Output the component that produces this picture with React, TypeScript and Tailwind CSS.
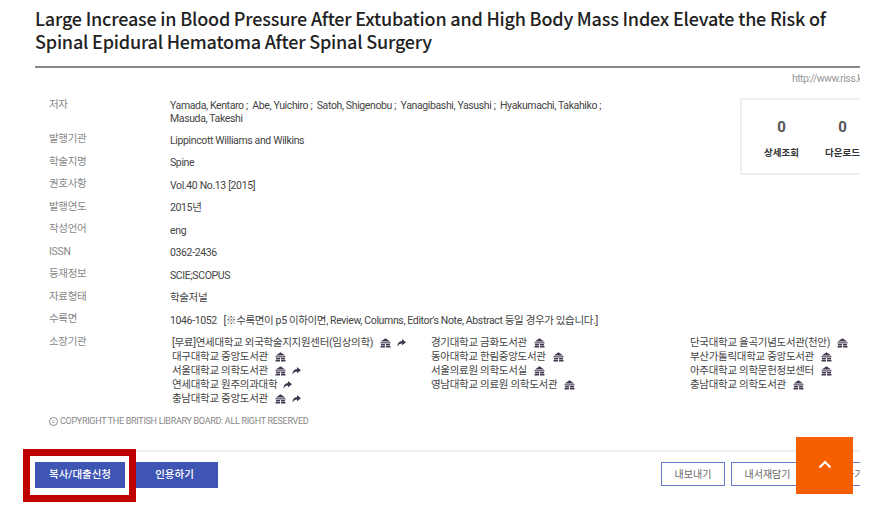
const font = "font-['Roboto','Noto_Sans_CJK_KR',sans-serif]";

const rows: [string, React.ReactNode][] = [
    ['발행기관', 'Lippincott Williams and Wilkins'],
    ['학술지명', 'Spine'],
    ['권호사항', 'Vol.40 No.13 [2015]'],
    ['발행연도', '2015년'],
    ['작성언어', 'eng'],
    ['ISSN', '0362-2436'],
    ['등재정보', 'SCIE;SCOPUS'],
    ['자료형태', '학술저널'],
    ['수록면', "1046-1052   [※수록면이 p5 이하이면, Review, Columns, Editor's Note, Abstract 등일 경우가 있습니다.]"],
];

type Holding = { name: string; link?: boolean; house?: boolean };

const holdings: Holding[][] = [
    [
        { name: '[무료]연세대학교 외국학술지지원센터(임상의학)', house: true, link: true },
        { name: '대구대학교 중앙도서관', house: true },
        { name: '서울대학교 의학도서관', house: true, link: true },
        { name: '연세대학교 원주의과대학', link: true },
        { name: '충남대학교 중앙도서관', house: true, link: true },
    ],
    [
        { name: '경기대학교 금화도서관', house: true },
        { name: '동아대학교 한림중앙도서관', house: true },
        { name: '서울의료원 의학도서실', house: true },
        { name: '영남대학교 의료원 의학도서관', house: true },
    ],
    [
        { name: '단국대학교 율곡기념도서관(천안)', house: true },
        { name: '부산가톨릭대학교 중앙도서관', house: true },
        { name: '아주대학교 의학문헌정보센터', house: true },
        { name: '충남대학교 의학도서관', house: true },
    ],
];

function HouseIcon() {
    return (
        <svg width="11" height="10" viewBox="0 0 11 10" className="ml-[7px] mt-[2px] shrink-0">
            <path d="M5.5 0.3 L10.2 3.6 H0.8 Z" fill="#433850" />
            <path d="M0.5 4.3 H10.5 V5.4 H0.5 Z" fill="#433850" />
            <path d="M1 6 H5 V7.4 H1 Z M6 6 H10 V7.4 H6 Z M0.5 8 H5 V9.6 H0.5 Z M6 8 H10.5 V9.6 H6 Z" fill="#433850" />
        </svg>
    );
}

function ShareIcon() {
    return (
        <svg width="9" height="8" viewBox="0 0 9 8" className="ml-[6px] mt-[3px] shrink-0">
            <path d="M5 0 L9 3.2 L5 6.2 V4.4 C3 4.4 1.6 5.2 0.6 7.6 C0.4 4.4 2 2 5 1.9 Z" fill="#433850" />
        </svg>
    );
}

export default function App() {
    return (
        <div className={`${font} relative w-[890px] h-[515px] overflow-hidden bg-white`}>
            <div className="w-[860px] h-[515px] overflow-hidden pl-[35px]">
                {/* Title */}
                <h1 className="pt-[7px] h-[66px] w-[825px] font-['Noto_Sans_CJK_KR','Noto_Sans',sans-serif] text-[18px] leading-[23px] tracking-[-0.2px] font-medium text-[#222] whitespace-nowrap">
                    Large Increase in Blood Pressure After Extubation and High Body Mass Index Elevate the Risk of
                    <br />
                    Spinal Epidural Hematoma After Spinal Surgery
                </h1>
                <div className="h-[2px] w-[825px] bg-[#888]" />
                <div className="w-[825px] h-[25px] overflow-hidden pl-[757px] pt-[4px] text-[10.5px] leading-[14px] tracking-[-0.55px] text-[#999] whitespace-nowrap">
                    http://www.riss.kr/link
                </div>

                <div className="flex w-[825px]">
                    {/* Detail rows */}
                    <div className="w-[705px] shrink-0 pl-[14px] text-[10.5px] leading-[14px] tracking-[-0.3px]">
                        <div className="flex pt-[6.25px] pb-[4.25px]">
                            <div className="w-[121px] shrink-0 -mt-[1.5px] text-[#888]">저자</div>
                            <div className="text-[#444] leading-[13px] tracking-[-0.37px]">
                                Yamada, Kentaro ;&nbsp; Abe, Yuichiro ;&nbsp; Satoh, Shigenobu ;&nbsp; Yanagibashi, Yasushi ;&nbsp; Hyakumachi, Takahiko ;
                                <br />
                                Masuda, Takeshi
                            </div>
                        </div>
                        {rows.map(([label, value]) => (
                            <div key={label} className="flex py-[4.25px]">
                                <div className="w-[121px] shrink-0 -mt-[1.5px] text-[#888]">{label}</div>
                                <div className="text-[#444] tracking-[-0.36px] whitespace-pre">{value}</div>
                            </div>
                        ))}
                    </div>
                    {/* Counters */}
                    <div className="mt-[5px] h-[77px] w-[160px] shrink-0 border-2 border-[#eeeeee] flex pl-[9px] pt-[17px]">
                        {['상세조회', '다운로드'].map((label) => (
                            <div key={label} className="w-[61px] shrink-0 text-center">
                                <div className="text-[15px] leading-[20px] font-bold text-[#555]">0</div>
                                <div className="mt-[9px] text-[9.5px] leading-[14px] font-bold text-[#333] whitespace-nowrap">{label}</div>
                            </div>
                        ))}
                    </div>
                </div>

                {/* Holdings */}
                <div className="flex pl-[14px] py-[4px] text-[10.5px] leading-[14px] tracking-[-0.3px]">
                    <div className="w-[123px] shrink-0 -mt-[1.5px] text-[#888]">소장기관</div>
                    <div className="flex text-[#444]">
                        {holdings.map((col, i) => (
                            <div key={i} className="w-[259px] shrink-0">
                                {col.map((h) => (
                                    <div key={h.name} className="flex items-start whitespace-nowrap">
                                        <span>{h.name}</span>
                                        {h.house && <HouseIcon />}
                                        {h.link && <ShareIcon />}
                                    </div>
                                ))}
                            </div>
                        ))}
                    </div>
                </div>

                <div className="mt-[4px] pl-[14px] flex items-center text-[9px] leading-[14px] text-[#888] tracking-[-0.3px] whitespace-nowrap">
                    <span className="mr-[2px] flex h-[9px] w-[9px] items-center justify-center rounded-full border border-[#888] text-[6px] leading-none">c</span>
                    COPYRIGHT THE BRITISH LIBRARY BOARD: ALL RIGHT RESERVED
                </div>

                {/* Actions */}
                <div className="mt-[22px] w-[825px] overflow-hidden border-t-2 border-[#eeeeee] pt-[10px] flex">
                    <button className="h-[26px] w-[90px] shrink-0 bg-[#3f55b3] text-[10.5px] font-medium text-white">복사/대출신청</button>
                    <button className="ml-[11px] h-[26px] w-[82px] shrink-0 bg-[#3f55b3] pr-[5px] text-[10.5px] font-medium text-white">인용하기</button>
                    <div className="ml-[443px] flex shrink-0 gap-[6px]">
                        <button className="h-[24px] w-[64px] border border-[#6478c8] text-[10px] text-[#666]">내보내기</button>
                        <button className="h-[24px] w-[73px] border border-[#6478c8] text-[10px] text-[#666]">내서재담기</button>
                        <button className="h-[24px] w-[70px] border border-[#6478c8] text-[10px] text-[#666] whitespace-nowrap">공유하기</button>
                    </div>
                </div>
            </div>

            {/* Red highlight over the first button */}
            <div className="absolute left-[23px] top-[449px] h-[53px] w-[113px] border-[7px] border-[#c00000]" />

            {/* Scroll to top */}
            <button className="absolute left-[796px] top-[437px] flex h-[57px] w-[57px] items-center justify-center bg-[#f55f00]">
                <svg width="14" height="9" viewBox="0 0 14 9" className="-mt-[2px]">
                    <path d="M1.5 7.5 L7 2 L12.5 7.5" fill="none" stroke="#fff" strokeWidth="2" />
                </svg>
            </button>
        </div>
    );
}
